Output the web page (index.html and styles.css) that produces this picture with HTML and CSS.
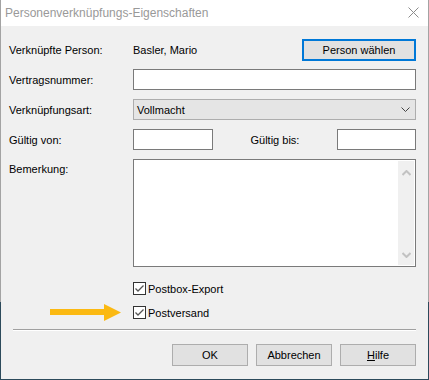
FILE: index.html
```
<!DOCTYPE html>
<html lang="de">
<head>
    <meta charset="UTF-8">
    <title>Personenverknüpfungs-Eigenschaften</title>
    <link rel="stylesheet" href="styles.css">
</head>
<body>
    <div class="window">
        <div class="titlebar">
            <span class="title">Personenverknüpfungs-Eigenschaften</span>
            <svg class="close" width="11" height="11" viewBox="0 0 11 11">
                <path d="M0.5 0.5 L10.5 10.5 M10.5 0.5 L0.5 10.5" stroke="#8c8c8c" stroke-width="1" fill="none"/>
            </svg>
        </div>
        <div class="content">
            <div class="form">
                <div class="row row-person">
                    <span class="label">Verknüpfte Person:</span>
                    <span class="value">Basler, Mario</span>
                    <button class="btn btn-default">Person wählen</button>
                </div>
                <div class="row">
                    <span class="label">Vertragsnummer:</span>
                    <div class="field field-wide"></div>
                </div>
                <div class="row">
                    <span class="label">Verknüpfungsart:</span>
                    <div class="combo">
                        <span>Vollmacht</span>
                        <svg width="9" height="5" viewBox="0 0 9 5">
                            <path d="M0.5 0.5 L4.5 4.5 L8.5 0.5" stroke="#444" stroke-width="1" fill="none"/>
                        </svg>
                    </div>
                </div>
                <div class="row">
                    <span class="label">Gültig von:</span>
                    <div class="field field-date"></div>
                    <span class="label label-mid">Gültig bis:</span>
                    <div class="field field-date"></div>
                </div>
                <div class="row row-memo">
                    <span class="label">Bemerkung:</span>
                    <div class="memo">
                        <div class="scrollbar">
                            <svg width="9" height="6" viewBox="0 0 9 6">
                                <path d="M0.5 5 L4.5 1 L8.5 5" stroke="#c2c2c2" stroke-width="2" fill="none"/>
                            </svg>
                            <svg width="9" height="6" viewBox="0 0 9 6">
                                <path d="M0.5 1 L4.5 5 L8.5 1" stroke="#c2c2c2" stroke-width="2" fill="none"/>
                            </svg>
                        </div>
                    </div>
                </div>
            </div>

            <div class="checks">
                <div class="check-row">
                    <span class="pointer"></span>
                    <label class="check">
                        <span class="box">
                            <svg width="11" height="11" viewBox="0 0 11 11">
                                <path d="M1.5 5.5 L4 8 L9.5 2.5" stroke="#555" stroke-width="1.3" fill="none"/>
                            </svg>
                        </span>
                        Postbox-Export
                    </label>
                </div>
                <div class="check-row">
                    <span class="pointer">
                        <svg width="72" height="17" viewBox="0 0 72 17">
                            <rect x="0" y="5" width="55" height="6" fill="#fbb912"/>
                            <path d="M54 0 L71 8.5 L54 17 Z" fill="#fbb912"/>
                        </svg>
                    </span>
                    <label class="check">
                        <span class="box">
                            <svg width="11" height="11" viewBox="0 0 11 11">
                                <path d="M1.5 5.5 L4 8 L9.5 2.5" stroke="#555" stroke-width="1.3" fill="none"/>
                            </svg>
                        </span>
                        Postversand
                    </label>
                </div>
            </div>

            <div class="separator"></div>

            <div class="buttons">
                <button class="btn">OK</button>
                <button class="btn">Abbrechen</button>
                <button class="btn"><u>H</u>ilfe</button>
            </div>
        </div>
    </div>
</body>
</html>
```
FILE: styles.css
```
html, body {
    margin: 0;
    padding: 0;
}
body {
    width: 429px;
    height: 380px;
    background: linear-gradient(#a3a3a3 0, #a3a3a3 302px, #2c4a5b 302px);
    font-family: "Liberation Sans", Arial, sans-serif;
    font-size: 11px;
    color: #000;
    overflow: hidden;
}
.window {
    margin: 0 1px;
    height: 379px;
    background: #f0f0f0;
    display: flex;
    flex-direction: column;
}
.titlebar {
    height: 26px;
    background: #fff;
    display: flex;
    align-items: center;
    justify-content: space-between;
    padding: 0 9px 0 4px;
}
.title {
    color: #999;
    font-size: 12px;
}
.close {
    margin-top: -2px;
}
.content {
    padding: 13px 12px 0 8px;
}
.row {
    display: flex;
    align-items: center;
    height: 21px;
    margin-bottom: 9px;
}
.row-person {
    height: 22px;
    margin-bottom: 8px;
}
.label {
    width: 124px;
    flex-shrink: 0;
}
.label-mid {
    width: 86px;
    margin-left: 38px;
}
.value {
    flex: 1;
}
.btn {
    font-family: inherit;
    font-size: 11px;
    color: #000;
    background: #e1e1e1;
    border: 1px solid #adadad;
    width: 76px;
    height: 22px;
    padding: 0;
    margin: 0;
}
.btn-default {
    width: 114px;
    border: 2px solid #0078d7;
}
.field {
    height: 21px;
    box-sizing: border-box;
    background: #fff;
    border: 1px solid #7a7a7a;
}
.field-wide {
    flex: 1;
}
.field-date {
    width: 80px;
}
.combo {
    flex: 1;
    height: 21px;
    box-sizing: border-box;
    background: #e5e5e5;
    border: 1px solid #adadad;
    display: flex;
    align-items: center;
    justify-content: space-between;
    padding: 0 5px 0 3px;
}
.row-memo {
    height: 108px;
    align-items: flex-start;
    margin-bottom: 0;
}
.row-memo .label {
    line-height: 21px;
}
.memo {
    flex: 1;
    height: 108px;
    box-sizing: border-box;
    background: #fff;
    border: 1px solid #7a7a7a;
    display: flex;
    justify-content: flex-end;
}
.scrollbar {
    width: 16px;
    margin: 1px 1px 1px 0;
    background: #f0f0f0;
    display: flex;
    flex-direction: column;
    justify-content: space-between;
    align-items: center;
    padding: 9px 0 7px;
}
.checks {
    margin-top: 15px;
    display: flex;
    flex-direction: column;
    gap: 11px;
}
.check-row {
    display: flex;
    align-items: center;
    height: 13px;
}
.pointer {
    width: 113px;
    margin-right: 11px;
    display: flex;
    justify-content: flex-end;
}
.check {
    display: flex;
    align-items: center;
    gap: 2px;
}
.box {
    width: 13px;
    height: 13px;
    box-sizing: border-box;
    border: 1px solid #333;
    background: #fff;
    display: flex;
    align-items: center;
    justify-content: center;
}
.separator {
    margin: 10px 0 0 4px;
    height: 1px;
    background: #a0a0a0;
    border-bottom: 1px solid #fff;
}
.buttons {
    margin-top: 13px;
    display: flex;
    justify-content: flex-end;
    gap: 8px;
}
```
